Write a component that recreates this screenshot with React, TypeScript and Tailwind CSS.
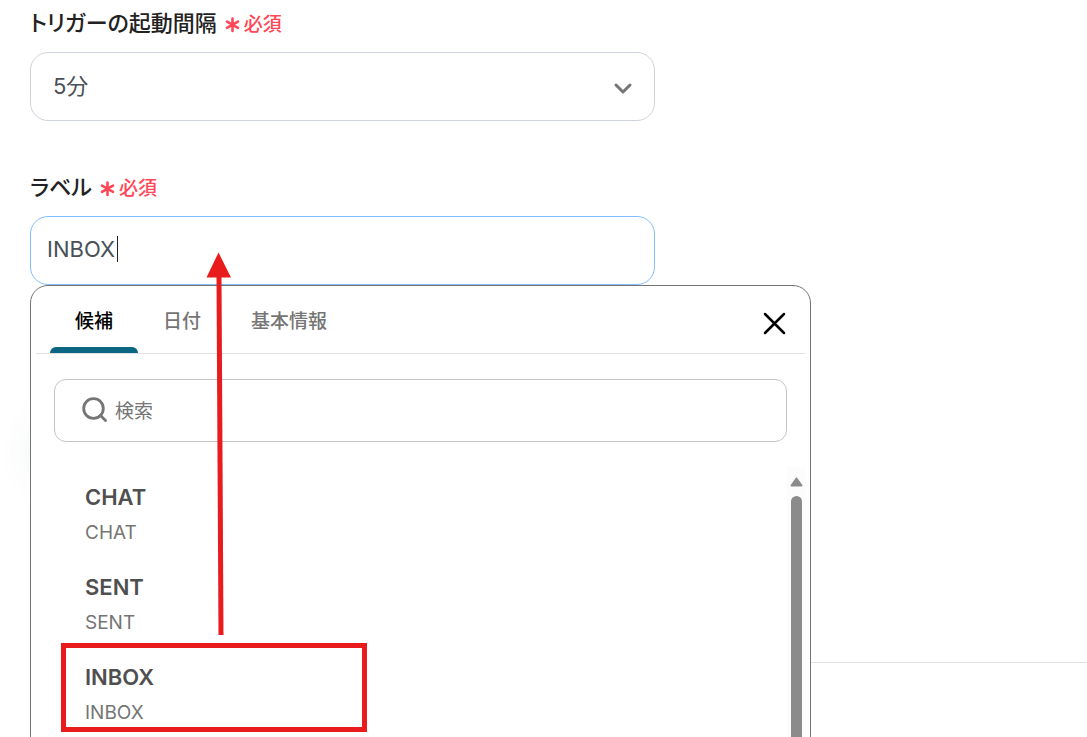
import { useState } from 'react';

const TABS = ['候補', '日付', '基本情報'];
const CANDIDATES = ['CHAT', 'SENT', 'INBOX'];

function RequiredMark() {
  return (
    <span className="flex items-center gap-1 pt-1 text-[19px] leading-7 font-medium text-[#ff4757]">
      <svg width="15" height="16" viewBox="0 0 15 16" fill="none" stroke="currentColor" strokeWidth="2.6" strokeLinecap="round" aria-hidden="true">
        <path d="M7.5 1.5v12.5M2 4.6l11 6.3M13 4.6L2 10.9" />
      </svg>
      必須
    </span>
  );
}

function FieldLabel({ htmlFor, text }: { htmlFor: string; text: string }) {
  return (
    <label htmlFor={htmlFor} className="flex items-center gap-2 text-[22px] leading-8 font-medium text-[#222]">
      <span className="[font-feature-settings:'palt']">{text}</span>
      <RequiredMark />
    </label>
  );
}

export default function App() {
  const [label, setLabel] = useState('INBOX');
  const [keyword, setKeyword] = useState('');
  const [activeTab, setActiveTab] = useState(TABS[0]);
  const [open, setOpen] = useState(true);

  return (
    <div className="relative h-screen overflow-hidden bg-white pt-[7px] pl-[30px] font-[Inter,'Noto_Sans_CJK_JP',sans-serif]">
      <div className="flex w-full max-w-[625px] flex-col gap-[50px]">
        <div className="flex flex-col gap-[13px]">
          <FieldLabel htmlFor="interval" text="トリガーの起動間隔" />
          <div className="relative">
            <select
              id="interval"
              className="h-[69px] w-full appearance-none rounded-[18px] border border-[#ced4da] bg-white px-[22px] text-[22px] text-[#495057] focus:outline-none"
            >
              <option>5分</option>
            </select>
            <svg className="pointer-events-none absolute top-[30px] right-[22px]" width="20" height="14" viewBox="0 0 20 14" fill="none" stroke="#757575" strokeWidth="3" strokeLinecap="round" strokeLinejoin="round" aria-hidden="true">
              <path d="M3 3l7 7 7-7" />
            </svg>
          </div>
        </div>

        <div className="flex flex-col gap-[13px]">
          <FieldLabel htmlFor="label" text="ラベル" />
          <div className="relative">
            <input
              id="label"
              type="text"
              value={label}
              onChange={(e) => setLabel(e.target.value)}
              onFocus={() => setOpen(true)}
              className="h-[69px] w-full rounded-[18px] border border-[#80bdff] bg-white px-4 pb-1 text-[22px] text-[#495057] caret-transparent focus:outline-none"
            />
            {/* Text caret */}
            <span className="absolute top-5 left-[87px] h-[26px] w-px bg-[#222]" />

            {open && (
              <div className="absolute top-full left-0 z-10 flex h-[640px] w-[781px] flex-col rounded-[18px] border border-[#757575] bg-white">
                <div className="mx-[5px] flex h-[68px] items-stretch border-b border-[#e0e0e0] pl-3.5">
                  {TABS.map((tab) => (
                    <button
                      key={tab}
                      onClick={() => setActiveTab(tab)}
                      className={
                        tab === activeTab
                          ? 'relative px-[25px] pt-1.5 text-[19px] font-medium text-black'
                          : 'relative px-[25px] pt-1.5 text-[19px] font-medium text-[#757575]'
                      }
                    >
                      {tab}
                      {tab === activeTab && <span className="absolute inset-x-0 bottom-0 h-1.5 rounded-t-md bg-[#0b6681]" />}
                    </button>
                  ))}
                  <button aria-label="閉じる" onClick={() => setOpen(false)} className="mr-[18px] ml-auto pt-2">
                    <svg width="25" height="25" viewBox="0 0 25 25" fill="none" stroke="#000" strokeWidth="2.5" strokeLinecap="round" aria-hidden="true">
                      <path d="M3 3l19 19M22 3L3 22" />
                    </svg>
                  </button>
                </div>

                <div className="mx-[23px] mt-[25px] flex h-[63px] shrink-0 items-center gap-2 rounded-xl border border-[#c4c4c4] px-[26px]">
                  <svg className="mb-0.5" width="26" height="26" viewBox="0 0 26 26" fill="none" stroke="#757575" strokeWidth="2.8" strokeLinecap="round" aria-hidden="true">
                    <circle cx="12.5" cy="11.5" r="9.8" />
                    <path d="M19.5 18.5l5 4.9" />
                  </svg>
                  <input
                    type="text"
                    aria-label="検索"
                    placeholder="検索"
                    value={keyword}
                    onChange={(e) => setKeyword(e.target.value)}
                    className="min-w-0 flex-1 bg-transparent pt-1 text-[19px] placeholder:text-[#757575] focus:outline-none"
                  />
                </div>

                <div className="mt-[25px] mr-1 flex min-h-0 flex-1 overflow-hidden">
                  <ul className="flex flex-1 flex-col gap-[18px] pt-3">
                    {CANDIDATES.map((name) => (
                      <li key={name}>
                        <button onClick={() => setLabel(name)} className="w-full pl-[54px] text-left">
                          <span className="block text-[22px] leading-9 font-semibold text-[#4f4f4f]">{name}</span>
                          <span className="block text-[19px] leading-9 text-[#757575]">{name}</span>
                        </button>
                      </li>
                    ))}
                  </ul>
                  {/* Scrollbar */}
                  <div className="flex w-[19px] flex-col items-center gap-[9px] bg-[#fcfcfc] pt-[10px]">
                    <svg width="13" height="10" viewBox="0 0 13 10" fill="#8b8b8b" stroke="#8b8b8b" strokeWidth="2" strokeLinejoin="round" aria-hidden="true">
                      <path d="M6.5 1.5L11.5 8.5H1.5z" />
                    </svg>
                    <div className="w-[11px] flex-1 rounded-full bg-[#8b8b8b]" />
                  </div>
                </div>
              </div>
            )}
          </div>
        </div>
      </div>

      {/* Card edge that sits behind the candidate panel */}
      <div className="mt-[136px] h-16 w-[200px] rounded-full shadow-[0_0_36px_rgba(30,90,70,0.08)]" />
      <hr className="mt-[177px] border-[#e0e0e0]" />

      {/* Annotation */}
      <div className="pointer-events-none absolute top-[643px] left-[61px] z-20 h-[89px] w-[306px] border-5 border-[#e81c1c]" />
      <svg className="pointer-events-none absolute top-[252px] left-[206px] z-20" width="26" height="384" viewBox="0 0 26 384" aria-hidden="true">
        <path d="M12.5 0.5L25 25.5H0.5z" fill="#e81c1c" />
        <path d="M13 24L15 383" stroke="#e81c1c" strokeWidth="5" />
      </svg>
    </div>
  );
}
